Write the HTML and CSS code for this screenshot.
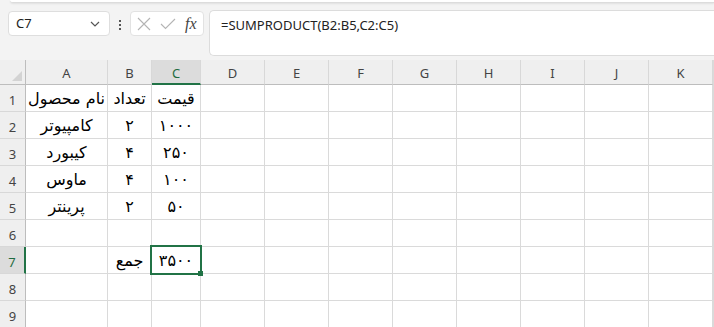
FILE: index.html
```html
<!DOCTYPE html>
<html lang="fa">
<head>
<meta charset="utf-8">
<link rel="stylesheet" href="styles.css">
</head>
<body>
<div class="app">
  <div class="ribbon-edge"></div>
  <div class="fbar">
    <div class="namebox">
      <span class="nb-text">C7</span>
      <svg class="chev" width="10" height="6" viewBox="0 0 10 6"><path d="M1 1 L5 5 L9 1" fill="none" stroke="#555" stroke-width="1.2"/></svg>
    </div>
    <div class="kebab"><i></i><i></i><i></i></div>
    <div class="btns">
      <svg width="14" height="14" viewBox="0 0 14 14"><path d="M1 1 L13 13 M13 1 L1 13" stroke="#b4b4b4" stroke-width="1.1" fill="none"/></svg>
      <svg width="16" height="12" viewBox="0 0 16 12"><path d="M1 6 L5.5 10.5 L15 1" stroke="#b4b4b4" stroke-width="1.1" fill="none"/></svg>
      <span class="fx">fx</span>
    </div>
    <div class="formula">=SUMPRODUCT(B2:B5,C2:C5)</div>
  </div>
  <div class="sheet">
    <div class="corner"><span class="tri"></span></div>
    <div class="ch">A</div><div class="ch">B</div><div class="ch sel">C</div><div class="ch">D</div><div class="ch">E</div><div class="ch">F</div><div class="ch">G</div><div class="ch">H</div><div class="ch">I</div><div class="ch">J</div><div class="ch">K</div>

    <div class="rh">1</div><div class="c">نام محصول</div><div class="c">تعداد</div><div class="c">قیمت</div><div class="c"></div><div class="c"></div><div class="c"></div><div class="c"></div><div class="c"></div><div class="c"></div><div class="c"></div><div class="c"></div>
    <div class="rh">2</div><div class="c">کامپیوتر</div><div class="c">۲</div><div class="c">۱۰۰۰</div><div class="c"></div><div class="c"></div><div class="c"></div><div class="c"></div><div class="c"></div><div class="c"></div><div class="c"></div><div class="c"></div>
    <div class="rh">3</div><div class="c">کیبورد</div><div class="c">۴</div><div class="c">۲۵۰</div><div class="c"></div><div class="c"></div><div class="c"></div><div class="c"></div><div class="c"></div><div class="c"></div><div class="c"></div><div class="c"></div>
    <div class="rh">4</div><div class="c">ماوس</div><div class="c">۴</div><div class="c">۱۰۰</div><div class="c"></div><div class="c"></div><div class="c"></div><div class="c"></div><div class="c"></div><div class="c"></div><div class="c"></div><div class="c"></div>
    <div class="rh">5</div><div class="c">پرینتر</div><div class="c">۲</div><div class="c">۵۰</div><div class="c"></div><div class="c"></div><div class="c"></div><div class="c"></div><div class="c"></div><div class="c"></div><div class="c"></div><div class="c"></div>
    <div class="rh">6</div><div class="c"></div><div class="c"></div><div class="c"></div><div class="c"></div><div class="c"></div><div class="c"></div><div class="c"></div><div class="c"></div><div class="c"></div><div class="c"></div><div class="c"></div>
    <div class="rh sel">7</div><div class="c"></div><div class="c">جمع</div><div class="c active">۳۵۰۰<span class="handle"></span></div><div class="c"></div><div class="c"></div><div class="c"></div><div class="c"></div><div class="c"></div><div class="c"></div><div class="c"></div><div class="c"></div>
    <div class="rh">8</div><div class="c"></div><div class="c"></div><div class="c"></div><div class="c"></div><div class="c"></div><div class="c"></div><div class="c"></div><div class="c"></div><div class="c"></div><div class="c"></div><div class="c"></div>
    <div class="rh">9</div><div class="c"></div><div class="c"></div><div class="c"></div><div class="c"></div><div class="c"></div><div class="c"></div><div class="c"></div><div class="c"></div><div class="c"></div><div class="c"></div><div class="c"></div>
  </div>
</div>
</body>
</html>
```
FILE: styles.css
```css
html, body {
  margin: 0;
  padding: 0;
  background: #f3f3f3;
  overflow: hidden;
}
.app {
  width: 714px;
  height: 327px;
  overflow: hidden;
  font-family: "Noto Sans", "Open Sans", sans-serif;
}
.ribbon-edge {
  height: 2px;
  margin-left: 10px;
  background: #fff;
  border-bottom: 1px solid #dcdcdc;
  border-bottom-left-radius: 6px;
  box-shadow: 0 1px 2px rgba(0,0,0,0.08);
}
.fbar {
  display: flex;
  align-items: flex-start;
  padding: 7px 0 0 8px;
  box-sizing: border-box;
  height: 55px;
}
.namebox {
  width: 102px;
  height: 25px;
  margin-top: 1px;
  box-sizing: border-box;
  background: #fff;
  border: 1px solid #dedede;
  border-radius: 4px;
  display: flex;
  align-items: center;
  justify-content: space-between;
  padding: 0 9px 0 7px;
  font-size: 13px;
  color: #222;
}
.nb-text { line-height: 1; }
.kebab {
  width: 20px;
  display: flex;
  flex-direction: column;
  align-items: center;
  gap: 2px;
  padding-top: 10px;
}
.kebab i {
  display: block;
  width: 2px;
  height: 2px;
  background: #555;
}
.btns {
  width: 74px;
  height: 25px;
  margin-top: 1px;
  box-sizing: border-box;
  background: #fff;
  border: 1px solid #e2e2e2;
  border-radius: 4px;
  display: flex;
  align-items: center;
  gap: 9px;
  padding-left: 6px;
}
.fx {
  font-family: "Liberation Serif", serif;
  font-style: italic;
  font-size: 16px;
  color: #444;
  line-height: 1;
}
.formula {
  margin-left: 5px;
  flex: 1;
  height: 46px;
  box-sizing: border-box;
  background: #fff;
  border: 1px solid #dcdcdc;
  border-right: none;
  border-radius: 5px 0 0 5px;
  padding: 5px 0 0 11px;
  font-size: 13px;
  color: #222;
}
.sheet {
  margin-top: 2px;
  display: grid;
  grid-template-columns: 26px 82px 44px 49px repeat(8, 64px);
  grid-template-rows: 25px repeat(9, 27px);
  background: #fff;
  width: 713px;
  border-right: 1px solid #dadada;
}
.corner {
  background: #efefef;
  border-right: 1px solid #bdbdbd;
  border-bottom: 1px solid #bdbdbd;
  position: relative;
}
.tri {
  position: absolute;
  right: 3px;
  bottom: 3px;
  width: 0;
  height: 0;
  border-left: 10px solid transparent;
  border-bottom: 10px solid #d3d3d3;
}
.ch {
  background: #efefef;
  border-right: 1px solid #d8d8d8;
  border-bottom: 1px solid #bdbdbd;
  display: flex;
  align-items: center;
  justify-content: center;
  font-size: 13px;
  color: #444;
  padding-top: 2px;
  box-sizing: border-box;
}
.ch.sel {
  background: #dcdcdc;
  color: #1e6b41;
  border-bottom: 2px solid #217346;
}
.rh {
  background: #efefef;
  border-right: 1px solid #bdbdbd;
  border-bottom: 1px solid #d8d8d8;
  display: flex;
  align-items: center;
  justify-content: center;
  font-size: 13px;
  color: #444;
  padding-top: 3px;
  box-sizing: border-box;
}
.rh.sel {
  background: #dcdcdc;
  color: #1e6b41;
  border-right: 2px solid #217346;
}
.c {
  border-right: 1px solid #dadada;
  border-bottom: 1px solid #dadada;
  display: flex;
  align-items: center;
  justify-content: center;
  direction: rtl;
  font-family: "DejaVu Sans", sans-serif;
  font-size: 16px;
  color: #000;
  padding-top: 1px;
  box-sizing: border-box;
}
.c.active {
  position: relative;
}
.c.active::after {
  content: "";
  position: absolute;
  left: -2px;
  top: -2px;
  right: -2px;
  bottom: -2px;
  border: 2px solid #217346;
}
.handle {
  position: absolute;
  right: -3px;
  bottom: -3px;
  width: 5px;
  height: 5px;
  background: #217346;
  z-index: 2;
}
```
